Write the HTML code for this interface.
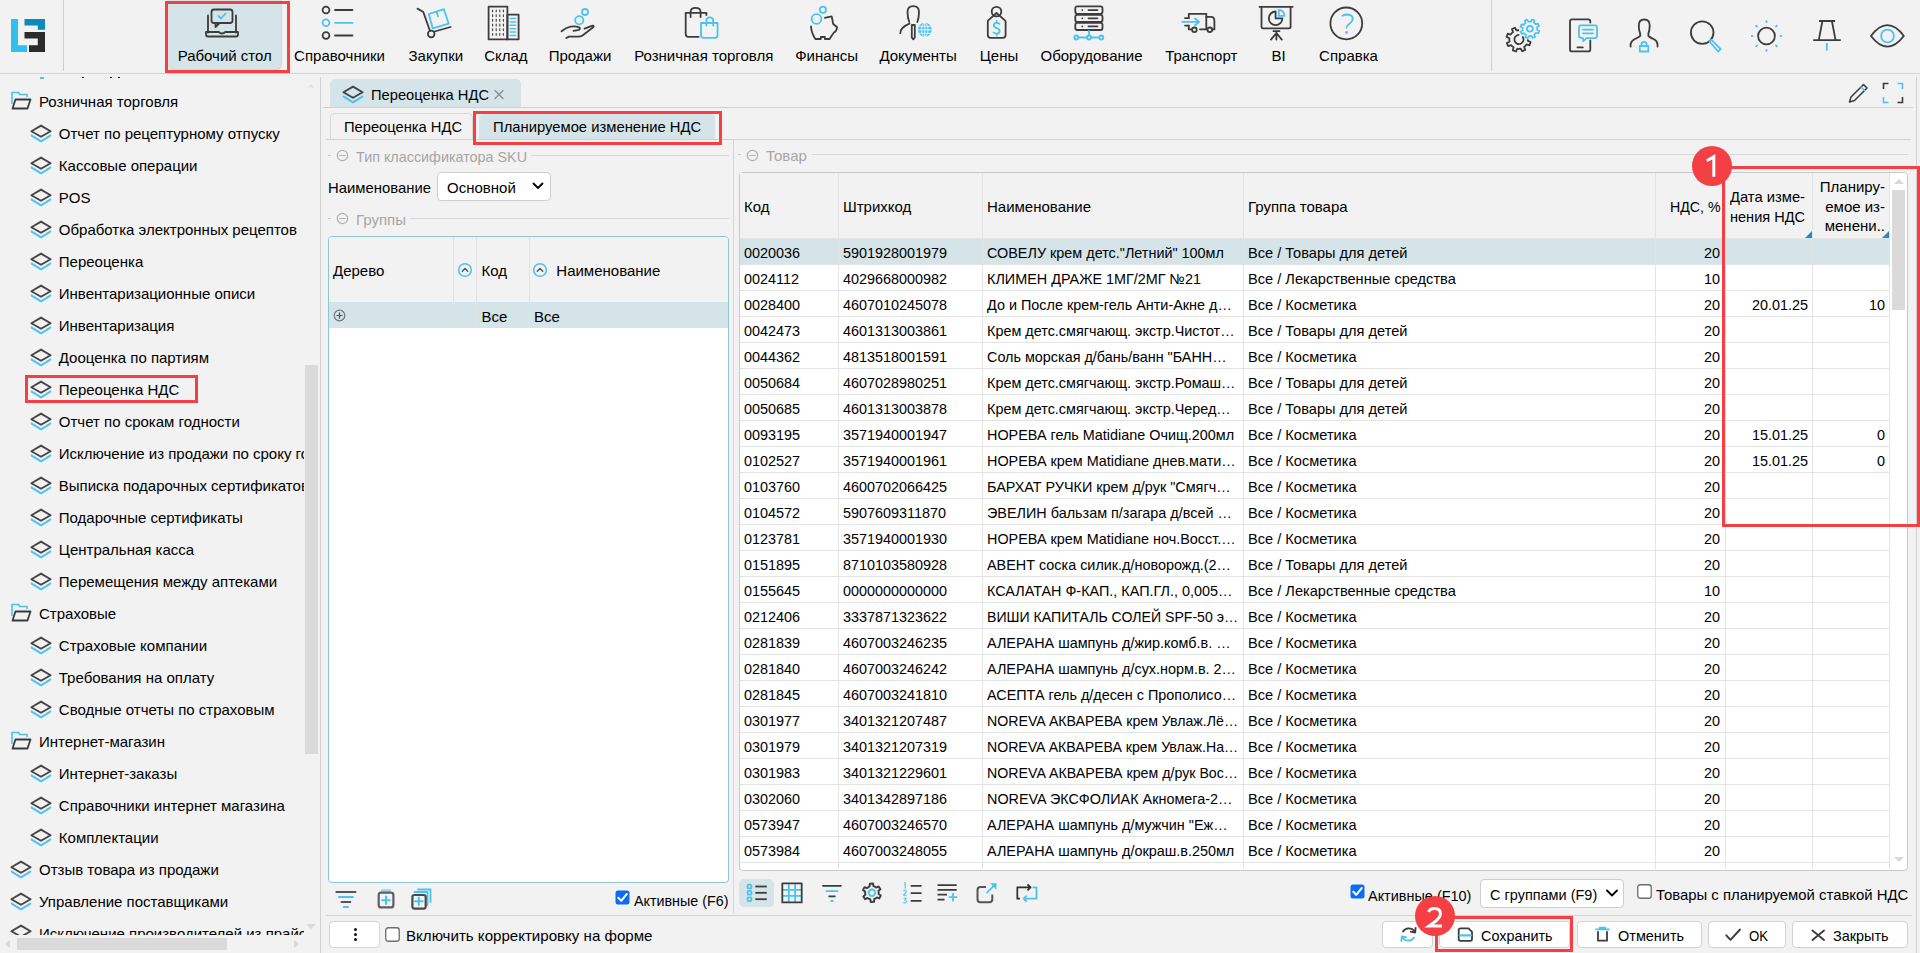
<!DOCTYPE html><html><head><meta charset="utf-8"><style>
html,body{margin:0;padding:0;}
body{width:1920px;height:953px;overflow:hidden;background:#f2f2f2;position:relative;font-family:"Liberation Sans",sans-serif;color:#000;}
.t{position:absolute;white-space:nowrap;}
.b{position:absolute;box-sizing:border-box;}
.clip{position:absolute;overflow:hidden;}
</style></head><body>

<div class="b" style="left:0px;top:73px;width:1920px;height:1px;background:#d3d3d3"></div>
<div class="b" style="left:63px;top:0px;width:1px;height:71px;background:#cfcfcf"></div>
<div class="b" style="left:1491px;top:0px;width:1px;height:71px;background:#cfcfcf"></div>
<svg class="b" style="left:0px;top:0px" width="64" height="72" viewBox="0 0 64 72" fill="none" stroke-linecap="round" stroke-linejoin="round"><path d="M11 19h7v26.3h9V52H11z" fill="#30c0f0"/><path d="M24.5 19H45v10.8h-7.2v-4.3H24.5z" fill="#0a89bc"/><path d="M24.5 32H45v20H29v-6.7h8.8v-6.8H24.5z" fill="#2b2b2b"/></svg>
<div class="b" style="left:168px;top:0px;width:114px;height:70px;background:#d4e4e9;border-radius:0 0 6px 6px;border-right:1px solid #c9d6da;border-bottom:1px solid #c9d6da"></div>
<div class="b" style="left:165px;top:1px;width:125px;height:72px;border:3px solid #f43f45"></div>
<div class="t" style="left:124.75px;width:200px;text-align:center;top:48.30px;font-size:15px;line-height:15px;">Рабочий стол</div>
<div class="t" style="left:239.55px;width:200px;text-align:center;top:48.30px;font-size:15px;line-height:15px;">Справочники</div>
<div class="t" style="left:335.85px;width:200px;text-align:center;top:48.30px;font-size:15px;line-height:15px;">Закупки</div>
<div class="t" style="left:405.9px;width:200px;text-align:center;top:48.30px;font-size:15px;line-height:15px;">Склад</div>
<div class="t" style="left:480.0px;width:200px;text-align:center;top:48.30px;font-size:15px;line-height:15px;">Продажи</div>
<div class="t" style="left:603.75px;width:200px;text-align:center;top:48.30px;font-size:15px;line-height:15px;">Розничная торговля</div>
<div class="t" style="left:726.625px;width:200px;text-align:center;top:48.30px;font-size:15px;line-height:15px;">Финансы</div>
<div class="t" style="left:818.125px;width:200px;text-align:center;top:48.30px;font-size:15px;line-height:15px;">Документы</div>
<div class="t" style="left:899.0px;width:200px;text-align:center;top:48.30px;font-size:15px;line-height:15px;">Цены</div>
<div class="t" style="left:991.5px;width:200px;text-align:center;top:48.30px;font-size:15px;line-height:15px;">Оборудование</div>
<div class="t" style="left:1101.25px;width:200px;text-align:center;top:48.30px;font-size:15px;line-height:15px;">Транспорт</div>
<div class="t" style="left:1178.5px;width:200px;text-align:center;top:48.30px;font-size:15px;line-height:15px;">BI</div>
<div class="t" style="left:1248.5px;width:200px;text-align:center;top:48.30px;font-size:15px;line-height:15px;">Справка</div>
<svg class="b" style="left:0;top:0" width="1920" height="72" viewBox="0 0 1920 72" stroke-linecap="round" stroke-linejoin="round"><rect x="211.5" y="9.5" width="21" height="13.5" rx="2.5" stroke="#3c3c3c" stroke-width="1.8" fill="none"/><path d="M215.5 23 L215.5 27 L219.5 23" stroke="#3c3c3c" stroke-width="1.8" fill="none"/><path d="M218.5 16 L221 18.5 L225.5 13.5" stroke="#4cc3ef" stroke-width="1.8" fill="none"/><path d="M208 15.5 V32.5 M236 15.5 V32.5" stroke="#3c3c3c" stroke-width="1.8" fill="none"/><path d="M206 32 H219 Q220 33.5 222 33.5 Q224 33.5 225 32 H238 V34.5 Q238 36.5 236 36.5 H208 Q206 36.5 206 34.5 Z" stroke="#3c3c3c" stroke-width="1.8" fill="none"/><circle cx="326" cy="10" r="3.4" stroke="#3c3c3c" stroke-width="1.8" fill="none"/><path d="M335 10 H352.5" stroke="#3c3c3c" stroke-width="1.8" fill="none"/><circle cx="326" cy="22.8" r="3.4" stroke="#4cc3ef" stroke-width="1.8" fill="none"/><path d="M335 22.8 H352.5" stroke="#4cc3ef" stroke-width="1.8" fill="none"/><circle cx="326" cy="35.5" r="3.4" stroke="#3c3c3c" stroke-width="1.8" fill="none"/><path d="M335 35.5 H352.5" stroke="#3c3c3c" stroke-width="1.8" fill="none"/><path d="M417.5 8.6 L423.3 12 L430 31" stroke="#3c3c3c" stroke-width="1.8" fill="none"/><circle cx="431.2" cy="34" r="3.3" stroke="#3c3c3c" stroke-width="1.8" fill="none"/><path d="M434.5 31.5 L450.6 27" stroke="#3c3c3c" stroke-width="1.8" fill="none"/><path d="M428.8 14 L443.9 9.2 L448.7 23.7 L432.7 28.3 Z" stroke="#4cc3ef" stroke-width="1.8" fill="none"/><path d="M436.8 11.8 L437.9 16.3" stroke="#4cc3ef" stroke-width="1.8" fill="none"/><rect x="488.6" y="6.6" width="18.8" height="32.8" stroke="#3c3c3c" stroke-width="1.8" fill="none" stroke-width="1.9"/><rect x="507.4" y="14.6" width="11.2" height="24.8" stroke="#3c3c3c" stroke-width="1.8" fill="none" stroke-width="1.9"/><path d="M492.6 10.0 V11.8" stroke="#3c3c3c" stroke-width="1.1"/><path d="M492.6 14.7 V16.5" stroke="#3c3c3c" stroke-width="1.1"/><path d="M492.6 19.400000000000002 V21.2" stroke="#3c3c3c" stroke-width="1.1"/><path d="M492.6 24.1 V25.9" stroke="#3c3c3c" stroke-width="1.1"/><path d="M492.6 28.8 V30.599999999999998" stroke="#3c3c3c" stroke-width="1.1"/><path d="M492.6 33.5 V35.3" stroke="#3c3c3c" stroke-width="1.1"/><path d="M496.2 10.0 V11.8" stroke="#3c3c3c" stroke-width="1.1"/><path d="M496.2 14.7 V16.5" stroke="#3c3c3c" stroke-width="1.1"/><path d="M496.2 19.400000000000002 V21.2" stroke="#3c3c3c" stroke-width="1.1"/><path d="M496.2 24.1 V25.9" stroke="#3c3c3c" stroke-width="1.1"/><path d="M496.2 28.8 V30.599999999999998" stroke="#3c3c3c" stroke-width="1.1"/><path d="M496.2 33.5 V35.3" stroke="#3c3c3c" stroke-width="1.1"/><path d="M499.8 10.0 V11.8" stroke="#3c3c3c" stroke-width="1.1"/><path d="M499.8 14.7 V16.5" stroke="#3c3c3c" stroke-width="1.1"/><path d="M499.8 19.400000000000002 V21.2" stroke="#3c3c3c" stroke-width="1.1"/><path d="M499.8 24.1 V25.9" stroke="#3c3c3c" stroke-width="1.1"/><path d="M499.8 28.8 V30.599999999999998" stroke="#3c3c3c" stroke-width="1.1"/><path d="M499.8 33.5 V35.3" stroke="#3c3c3c" stroke-width="1.1"/><path d="M503.4 10.0 V11.8" stroke="#3c3c3c" stroke-width="1.1"/><path d="M503.4 14.7 V16.5" stroke="#3c3c3c" stroke-width="1.1"/><path d="M503.4 19.400000000000002 V21.2" stroke="#3c3c3c" stroke-width="1.1"/><path d="M503.4 24.1 V25.9" stroke="#3c3c3c" stroke-width="1.1"/><path d="M503.4 28.8 V30.599999999999998" stroke="#3c3c3c" stroke-width="1.1"/><path d="M503.4 33.5 V35.3" stroke="#3c3c3c" stroke-width="1.1"/><path d="M510.2 18.5 H515.6" stroke="#4cc3ef" stroke-width="1.5"/><path d="M510.2 21.9 H515.6" stroke="#4cc3ef" stroke-width="1.5"/><path d="M510.2 25.3 H515.6" stroke="#4cc3ef" stroke-width="1.5"/><path d="M510.2 28.7 H515.6" stroke="#4cc3ef" stroke-width="1.5"/><path d="M510.2 32.1 H515.6" stroke="#4cc3ef" stroke-width="1.5"/><path d="M510.2 35.5 H515.6" stroke="#4cc3ef" stroke-width="1.5"/><circle cx="579.3" cy="20.3" r="4.1" stroke="#4cc3ef" stroke-width="1.8" fill="none"/><circle cx="585" cy="12" r="3" stroke="#4cc3ef" stroke-width="1.8" fill="none"/><path d="M561.5 31.2 Q566 27.5 570.5 26.6 Q576 26 579 27.3 Q581 28.6 579 29.8 L573.5 30.8" stroke="#3c3c3c" stroke-width="1.8" fill="none"/><path d="M584.5 28.6 L592.5 25.6 Q594.5 25.6 593.2 27.3 L582.5 35.5 Q581 36.6 578 36.6 L569 36.6 L566.3 38" stroke="#3c3c3c" stroke-width="1.8" fill="none"/><path d="M698.7 36.8 H688.5 Q685.7 36.8 685.7 34 V12.9 H706.4 V15" stroke="#3c3c3c" stroke-width="1.8" fill="none"/><path d="M690.6 17 V12 Q690.6 7.9 695.6 7.9 Q700.6 7.9 700.6 12 V17" stroke="#3c3c3c" stroke-width="1.8" fill="none"/><path d="M701 23 H717.6 V35.3 Q717.6 37.9 715 37.9 H703.6 Q701 37.9 701 35.3 Z" stroke="#4cc3ef" stroke-width="1.8" fill="none"/><path d="M706.4 25.5 V21 Q706.4 17.3 709.8 17.3 Q713.2 17.3 713.2 21 V25.5" stroke="#4cc3ef" stroke-width="1.8" fill="none"/><circle cx="816.5" cy="19" r="4.9" stroke="#4cc3ef" stroke-width="1.8" fill="none"/><circle cx="822.9" cy="9.8" r="3.1" stroke="#4cc3ef" stroke-width="1.8" fill="none"/><path d="M811 26.4 Q811.5 33.5 815.4 39 H820.8 V37 H824.9 V39 H829.6 Q832 35 834 32.5 Q837 31 837 27 Q834.5 25 833 23.7 Q832.5 19.5 831.6 16.3 Q828 17 824.9 17.8" stroke="#3c3c3c" stroke-width="1.8" fill="none"/><path d="M909.3 22 Q907.5 18 907.5 12 Q907.5 6.1 913.2 6.1 Q919 6.1 919 12 Q919 18 917.3 22" stroke="#3c3c3c" stroke-width="1.8" fill="none"/><path d="M909.5 23.7 Q905 25.5 902.5 28 Q900.4 30 900.4 33.2" stroke="#3c3c3c" stroke-width="1.8" fill="none"/><path d="M911.8 25 H914.8 L914.8 37.5 L913.3 39.3 L911.8 37.5 Z" stroke="#3c3c3c" stroke-width="1.8" fill="none" stroke-width="1.5"/><circle cx="924.8" cy="29.8" r="7" fill="#4cc3ef"/><path d="M917.8 29.8 H931.8 M924.8 22.8 V36.8 M918.8 26.3 H930.8 M918.8 33.3 H930.8" stroke="#fff" stroke-width="0.8"/><ellipse cx="924.8" cy="29.8" rx="3.2" ry="7" stroke="#fff" stroke-width="0.8" fill="none"/><circle cx="996.5" cy="11.6" r="4.8" stroke="#3c3c3c" stroke-width="1.8" fill="none"/><path d="M996.5 13 L988 20.6 Q987.8 21 987.8 22 V35 Q987.8 37.8 990.6 37.8 H1002.8 Q1005.6 37.8 1005.6 35 V22 Q1005.6 21 1005.2 20.6 Z" stroke="#3c3c3c" stroke-width="1.8" fill="none" fill="#f2f2f2"/><path d="M999.5 23.8 Q998.5 22.8 996.7 22.8 Q993.8 22.8 993.8 25.3 Q993.8 27.4 996.7 28.1 Q999.6 28.8 999.6 31.2 Q999.6 33.6 996.7 33.6 Q994.5 33.6 993.6 32.5 M996.7 20.8 V22.8 M996.7 33.6 V35.4" stroke="#4cc3ef" stroke-width="1.8" fill="none" stroke-width="1.7"/><rect x="1075.3" y="6.3" width="27.2" height="7.500000000000001" rx="2" stroke="#3c3c3c" stroke-width="1.8" fill="none"/><circle cx="1082.3" cy="10.05" r="0.9" fill="#3c3c3c"/><path d="M1088.5 10.05 H1097.5" stroke="#3c3c3c" stroke-width="1.8" fill="none"/><rect x="1075.3" y="14.8" width="27.2" height="7.099999999999998" rx="2" stroke="#3c3c3c" stroke-width="1.8" fill="none"/><circle cx="1082.3" cy="18.35" r="0.9" fill="#3c3c3c"/><path d="M1088.5 18.35 H1097.5" stroke="#3c3c3c" stroke-width="1.8" fill="none"/><rect x="1075.3" y="22.8" width="27.2" height="7.199999999999999" rx="2" stroke="#3c3c3c" stroke-width="1.8" fill="none"/><circle cx="1082.3" cy="26.4" r="0.9" fill="#3c3c3c"/><path d="M1088.5 26.4 H1097.5" stroke="#3c3c3c" stroke-width="1.8" fill="none"/><path d="M1078.3 37.5 H1087 M1091 37.5 H1099.2 M1089 31 V35.5" stroke="#4cc3ef" stroke-width="1.8" fill="none" stroke-width="1.6"/><circle cx="1076.3" cy="37.5" r="2" stroke="#4cc3ef" stroke-width="1.8" fill="none" stroke-width="1.5"/><circle cx="1089" cy="37.5" r="2" stroke="#4cc3ef" stroke-width="1.8" fill="none" stroke-width="1.5"/><circle cx="1101.3" cy="37.5" r="2" stroke="#4cc3ef" stroke-width="1.8" fill="none" stroke-width="1.5"/><path d="M1188.8 18.1 V13.8 H1206.3 V29.4 H1200" stroke="#3c3c3c" stroke-width="1.8" fill="none"/><path d="M1206.3 16.9 H1211 Q1214.4 16.9 1214.4 21 V29.4 H1212" stroke="#3c3c3c" stroke-width="1.8" fill="none"/><path d="M1188.8 25.6 V29.4 H1192" stroke="#3c3c3c" stroke-width="1.8" fill="none"/><path d="M1185 18.1 H1188.8 M1185 25.6 H1188.8" stroke="#3c3c3c" stroke-width="1.8" fill="none"/><circle cx="1194.4" cy="29.8" r="2.3" stroke="#3c3c3c" stroke-width="1.8" fill="none"/><circle cx="1209.8" cy="29.8" r="2.3" stroke="#3c3c3c" stroke-width="1.8" fill="none"/><path d="M1182.3 21.9 H1198.5 M1195 18.5 L1199.2 21.9 L1195 25.3" stroke="#4cc3ef" stroke-width="1.8" fill="none"/><path d="M1259.5 6.8 H1292.7" stroke="#3c3c3c" stroke-width="1.8" fill="none"/><path d="M1261.5 6.8 V26.8 Q1261.5 28.4 1263 28.4 H1289 Q1290.6 28.4 1290.6 26.8 V6.8" stroke="#3c3c3c" stroke-width="1.8" fill="none"/><path d="M1275.6 11.5 A6.8 6.8 0 1 0 1282.4 18.3 H1275.6 Z" stroke="#3c3c3c" stroke-width="1.8" fill="none"/><path d="M1278.8 9.8 V15.9 H1284.6 A5.9 6 0 0 0 1278.8 9.8 Z" stroke="#4cc3ef" stroke-width="1.8" fill="none" stroke-width="1.6"/><path d="M1273.4 31.1 H1279.5 M1276.4 31.1 V39.6 M1276.4 33 L1271 39.6 M1276.4 33 L1281.8 39.6" stroke="#3c3c3c" stroke-width="1.8" fill="none"/><circle cx="1346.3" cy="23.4" r="15.9" stroke="#3c3c3c" stroke-width="1.8" fill="none" stroke-width="1.9"/><path d="M1342.5 15.8 Q1344.5 14.5 1347.3 14.5 Q1352.8 14.8 1352.8 18.6 Q1352.8 21.4 1349.5 23.8 Q1346.5 26 1346.5 27.5" stroke="#4cc3ef" stroke-width="1.8" fill="none"/><circle cx="1346.5" cy="32.4" r="1.4" fill="#4cc3ef"/><defs><clipPath id="gclip"><path d="M1500 10 H1560 V60 H1500Z M1530 28.8 m-11 0 a11 11 0 1 0 22 0 a11 11 0 1 0 -22 0Z" clip-rule="evenodd"/></clipPath></defs><g clip-path="url(#gclip)"><path d="M1527.90 39.50 L1527.81 40.81 L1530.60 42.18 L1529.47 45.26 L1526.45 44.48 L1525.18 46.08 L1525.18 46.08 L1524.18 46.94 L1525.19 49.89 L1522.22 51.26 L1520.63 48.58 L1518.60 48.80 L1518.60 48.80 L1517.29 48.71 L1515.92 51.50 L1512.84 50.37 L1513.62 47.35 L1512.02 46.08 L1512.02 46.08 L1511.16 45.08 L1508.21 46.09 L1506.84 43.12 L1509.52 41.53 L1509.30 39.50 L1509.30 39.50 L1509.39 38.19 L1506.60 36.82 L1507.73 33.74 L1510.75 34.52 L1512.02 32.92 L1512.02 32.92 L1513.02 32.06 L1512.01 29.11 L1514.98 27.74 L1516.57 30.42 L1518.60 30.20 L1518.60 30.20 L1519.91 30.29 L1521.28 27.50 L1524.36 28.63 L1523.58 31.65 L1525.18 32.92 L1525.18 32.92 L1526.04 33.92 L1528.99 32.91 L1530.36 35.88 L1527.68 37.47 L1527.90 39.50Z" stroke="#3c3c3c" stroke-width="1.8" fill="none" stroke-linejoin="round"/></g><path d="M1522.8 37 A4.6 4.6 0 1 1 1518.6 34.9" stroke="#3c3c3c" stroke-width="1.8" fill="none"/><path d="M1537.20 28.80 L1537.13 29.83 L1539.27 30.89 L1538.38 33.29 L1536.06 32.71 L1535.06 33.96 L1535.06 33.96 L1534.28 34.64 L1535.04 36.91 L1532.72 37.98 L1531.49 35.92 L1529.90 36.10 L1529.90 36.10 L1528.87 36.03 L1527.81 38.17 L1525.41 37.28 L1525.99 34.96 L1524.74 33.96 L1524.74 33.96 L1524.06 33.18 L1521.79 33.94 L1520.72 31.62 L1522.78 30.39 L1522.60 28.80 L1522.60 28.80 L1522.67 27.77 L1520.53 26.71 L1521.42 24.31 L1523.74 24.89 L1524.74 23.64 L1524.74 23.64 L1525.52 22.96 L1524.76 20.69 L1527.08 19.62 L1528.31 21.68 L1529.90 21.50 L1529.90 21.50 L1530.93 21.57 L1531.99 19.43 L1534.39 20.32 L1533.81 22.64 L1535.06 23.64 L1535.06 23.64 L1535.74 24.42 L1538.01 23.66 L1539.08 25.98 L1537.02 27.21 L1537.20 28.80Z" stroke="#4cc3ef" stroke-width="1.7" fill="none" stroke-linejoin="round"/><circle cx="1529.9" cy="28.8" r="2.9" stroke="#4cc3ef" stroke-width="1.8" fill="none" stroke-width="1.6"/><path d="M1590.3 22.5 V21.3 Q1590.3 19.3 1588.3 19.3 H1572 Q1570 19.3 1570 21.3 V49.4 Q1570 51.4 1572 51.4 H1588.3 Q1590.3 51.4 1590.3 49.4 V40.5" stroke="#3c3c3c" stroke-width="1.8" fill="none"/><path d="M1577.5 47.4 H1582.8" stroke="#3c3c3c" stroke-width="1.8" fill="none"/><path d="M1581 25.3 H1595 Q1597 25.3 1597 27.3 V36.1 Q1597 38.1 1595 38.1 H1586.5 L1583.3 41.2 L1583 38.1 Q1579 38.1 1579 36.1 V27.3 Q1579 25.3 1581 25.3 Z" stroke="#4cc3ef" stroke-width="1.8" fill="none"/><path d="M1583 29.7 H1593 M1583 33.3 H1593" stroke="#4cc3ef" stroke-width="1.8" fill="none"/><path d="M1630.6 46.5 V44 Q1631.5 40.5 1635 39 Q1639.5 37 1640.3 35.5 Q1640.3 33.5 1639.3 30.6 Q1638.8 28 1638.8 25.5 Q1638.8 19.5 1644.3 19.5 Q1649.7 19.5 1649.7 25.5 Q1649.7 28 1649.2 30.6 Q1648.2 33.5 1648.3 35.5 Q1649 37 1653.5 39 Q1657 40.5 1657.5 44 V46.5" stroke="#3c3c3c" stroke-width="1.8" fill="none"/><rect x="1639.8" y="46" width="8.5" height="5.5" stroke="#4cc3ef" stroke-width="1.8" fill="none" stroke-width="1.6"/><path d="M1641.5 46 V44.3 Q1641.5 41.8 1644 41.8 Q1646.6 41.8 1646.6 44.3 V46" stroke="#4cc3ef" stroke-width="1.8" fill="none" stroke-width="1.6"/><circle cx="1702.2" cy="32.6" r="11.3" stroke="#3c3c3c" stroke-width="1.8" fill="none" stroke-width="1.9"/><path d="M1709.5 41.5 L1711.3 39.7 L1720.7 49.1 L1718.1 51.5 Z" stroke="#4cc3ef" stroke-width="1.8" fill="none" stroke-width="1.6"/><circle cx="1766.5" cy="36" r="8.4" stroke="#3c3c3c" stroke-width="1.8" fill="none"/><path d="M1779.70 36.00 L1782.10 36.00" stroke="#4cc3ef" stroke-width="1.8" fill="none" stroke-width="1.7" stroke-linecap="butt"/><path d="M1775.41 44.91 L1777.25 46.75" stroke="#4cc3ef" stroke-width="1.8" fill="none" stroke-width="1.7" stroke-linecap="butt"/><path d="M1766.50 49.20 L1766.50 51.60" stroke="#4cc3ef" stroke-width="1.8" fill="none" stroke-width="1.7" stroke-linecap="butt"/><path d="M1757.59 44.91 L1755.75 46.75" stroke="#4cc3ef" stroke-width="1.8" fill="none" stroke-width="1.7" stroke-linecap="butt"/><path d="M1753.30 36.00 L1750.90 36.00" stroke="#4cc3ef" stroke-width="1.8" fill="none" stroke-width="1.7" stroke-linecap="butt"/><path d="M1757.59 27.09 L1755.75 25.25" stroke="#4cc3ef" stroke-width="1.8" fill="none" stroke-width="1.7" stroke-linecap="butt"/><path d="M1766.50 22.80 L1766.50 20.40" stroke="#4cc3ef" stroke-width="1.8" fill="none" stroke-width="1.7" stroke-linecap="butt"/><path d="M1775.41 27.09 L1777.25 25.25" stroke="#4cc3ef" stroke-width="1.8" fill="none" stroke-width="1.7" stroke-linecap="butt"/><path d="M1819 21 H1835.1 M1822.4 21 L1818.8 39.8 M1831.9 21 L1835.5 39.8 M1813.2 40.2 H1840.8" stroke="#3c3c3c" stroke-width="1.8" fill="none" stroke-linecap="butt"/><path d="M1826.8 43 V50.6" stroke="#4cc3ef" stroke-width="1.8" fill="none" stroke-linecap="butt"/><path d="M1871 36 Q1879 25.2 1887.4 25.2 Q1895.8 25.2 1903.8 36 Q1895.8 46.6 1887.4 46.6 Q1879 46.6 1871 36 Z" stroke="#3c3c3c" stroke-width="1.8" fill="none"/><circle cx="1887.5" cy="36" r="6.4" stroke="#4cc3ef" stroke-width="1.8" fill="none"/></svg>
<div class="b" style="left:320px;top:77px;width:1px;height:876px;background:#d0d0d0"></div>
<div class="clip" style="left:0;top:74px;width:304px;height:861px;">

<svg class="b" style="left:11px;top:17.0px" width="21" height="20" viewBox="0 0 21 20" fill="none"><path d="M1 13 V1.5 H7.5 L8.8 3.5 H16 V6" stroke="#4cc3ef" stroke-width="1.6"/><path d="M4.5 8.5 H19.5 L16.5 17.5 H1.5 Z" stroke="#3a3a3a" stroke-width="1.8" stroke-linejoin="round"/></svg>
<div class="t" style="left:39px;top:19.80px;font-size:15px;line-height:15px;">Розничная торговля</div>
<svg class="b" style="left:30px;top:49.5px" width="23" height="20" viewBox="0 0 23 20" fill="none"><path d="M11 1.6 L20.6 7.2 L11 12.8 L1.4 7.2 Z" stroke="#444" stroke-width="1.9" stroke-linejoin="round"/><path d="M1.7 11.6 L11 17.3 L20.3 11.6" stroke="#4cc3ef" stroke-width="2" stroke-linejoin="round" stroke-linecap="round"/></svg>
<div class="t" style="left:58.8px;top:51.80px;font-size:15px;line-height:15px;">Отчет по рецептурному отпуску</div>
<svg class="b" style="left:30px;top:81.5px" width="23" height="20" viewBox="0 0 23 20" fill="none"><path d="M11 1.6 L20.6 7.2 L11 12.8 L1.4 7.2 Z" stroke="#444" stroke-width="1.9" stroke-linejoin="round"/><path d="M1.7 11.6 L11 17.3 L20.3 11.6" stroke="#4cc3ef" stroke-width="2" stroke-linejoin="round" stroke-linecap="round"/></svg>
<div class="t" style="left:58.8px;top:83.80px;font-size:15px;line-height:15px;">Кассовые операции</div>
<svg class="b" style="left:30px;top:113.5px" width="23" height="20" viewBox="0 0 23 20" fill="none"><path d="M11 1.6 L20.6 7.2 L11 12.8 L1.4 7.2 Z" stroke="#444" stroke-width="1.9" stroke-linejoin="round"/><path d="M1.7 11.6 L11 17.3 L20.3 11.6" stroke="#4cc3ef" stroke-width="2" stroke-linejoin="round" stroke-linecap="round"/></svg>
<div class="t" style="left:58.8px;top:115.80px;font-size:15px;line-height:15px;">POS</div>
<svg class="b" style="left:30px;top:145.5px" width="23" height="20" viewBox="0 0 23 20" fill="none"><path d="M11 1.6 L20.6 7.2 L11 12.8 L1.4 7.2 Z" stroke="#444" stroke-width="1.9" stroke-linejoin="round"/><path d="M1.7 11.6 L11 17.3 L20.3 11.6" stroke="#4cc3ef" stroke-width="2" stroke-linejoin="round" stroke-linecap="round"/></svg>
<div class="t" style="left:58.8px;top:147.80px;font-size:15px;line-height:15px;">Обработка электронных рецептов</div>
<svg class="b" style="left:30px;top:177.5px" width="23" height="20" viewBox="0 0 23 20" fill="none"><path d="M11 1.6 L20.6 7.2 L11 12.8 L1.4 7.2 Z" stroke="#444" stroke-width="1.9" stroke-linejoin="round"/><path d="M1.7 11.6 L11 17.3 L20.3 11.6" stroke="#4cc3ef" stroke-width="2" stroke-linejoin="round" stroke-linecap="round"/></svg>
<div class="t" style="left:58.8px;top:179.80px;font-size:15px;line-height:15px;">Переоценка</div>
<svg class="b" style="left:30px;top:209.5px" width="23" height="20" viewBox="0 0 23 20" fill="none"><path d="M11 1.6 L20.6 7.2 L11 12.8 L1.4 7.2 Z" stroke="#444" stroke-width="1.9" stroke-linejoin="round"/><path d="M1.7 11.6 L11 17.3 L20.3 11.6" stroke="#4cc3ef" stroke-width="2" stroke-linejoin="round" stroke-linecap="round"/></svg>
<div class="t" style="left:58.8px;top:211.80px;font-size:15px;line-height:15px;">Инвентаризационные описи</div>
<svg class="b" style="left:30px;top:241.5px" width="23" height="20" viewBox="0 0 23 20" fill="none"><path d="M11 1.6 L20.6 7.2 L11 12.8 L1.4 7.2 Z" stroke="#444" stroke-width="1.9" stroke-linejoin="round"/><path d="M1.7 11.6 L11 17.3 L20.3 11.6" stroke="#4cc3ef" stroke-width="2" stroke-linejoin="round" stroke-linecap="round"/></svg>
<div class="t" style="left:58.8px;top:243.80px;font-size:15px;line-height:15px;">Инвентаризация</div>
<svg class="b" style="left:30px;top:273.5px" width="23" height="20" viewBox="0 0 23 20" fill="none"><path d="M11 1.6 L20.6 7.2 L11 12.8 L1.4 7.2 Z" stroke="#444" stroke-width="1.9" stroke-linejoin="round"/><path d="M1.7 11.6 L11 17.3 L20.3 11.6" stroke="#4cc3ef" stroke-width="2" stroke-linejoin="round" stroke-linecap="round"/></svg>
<div class="t" style="left:58.8px;top:275.80px;font-size:15px;line-height:15px;">Дооценка по партиям</div>
<svg class="b" style="left:30px;top:305.5px" width="23" height="20" viewBox="0 0 23 20" fill="none"><path d="M11 1.6 L20.6 7.2 L11 12.8 L1.4 7.2 Z" stroke="#444" stroke-width="1.9" stroke-linejoin="round"/><path d="M1.7 11.6 L11 17.3 L20.3 11.6" stroke="#4cc3ef" stroke-width="2" stroke-linejoin="round" stroke-linecap="round"/></svg>
<div class="t" style="left:58.8px;top:307.80px;font-size:15px;line-height:15px;">Переоценка НДС</div>
<svg class="b" style="left:30px;top:337.5px" width="23" height="20" viewBox="0 0 23 20" fill="none"><path d="M11 1.6 L20.6 7.2 L11 12.8 L1.4 7.2 Z" stroke="#444" stroke-width="1.9" stroke-linejoin="round"/><path d="M1.7 11.6 L11 17.3 L20.3 11.6" stroke="#4cc3ef" stroke-width="2" stroke-linejoin="round" stroke-linecap="round"/></svg>
<div class="t" style="left:58.8px;top:339.80px;font-size:15px;line-height:15px;">Отчет по срокам годности</div>
<svg class="b" style="left:30px;top:369.5px" width="23" height="20" viewBox="0 0 23 20" fill="none"><path d="M11 1.6 L20.6 7.2 L11 12.8 L1.4 7.2 Z" stroke="#444" stroke-width="1.9" stroke-linejoin="round"/><path d="M1.7 11.6 L11 17.3 L20.3 11.6" stroke="#4cc3ef" stroke-width="2" stroke-linejoin="round" stroke-linecap="round"/></svg>
<div class="t" style="left:58.8px;top:371.80px;font-size:15px;line-height:15px;">Исключение из продажи по сроку годности</div>
<svg class="b" style="left:30px;top:401.5px" width="23" height="20" viewBox="0 0 23 20" fill="none"><path d="M11 1.6 L20.6 7.2 L11 12.8 L1.4 7.2 Z" stroke="#444" stroke-width="1.9" stroke-linejoin="round"/><path d="M1.7 11.6 L11 17.3 L20.3 11.6" stroke="#4cc3ef" stroke-width="2" stroke-linejoin="round" stroke-linecap="round"/></svg>
<div class="t" style="left:58.8px;top:403.80px;font-size:15px;line-height:15px;">Выписка подарочных сертификатов</div>
<svg class="b" style="left:30px;top:433.5px" width="23" height="20" viewBox="0 0 23 20" fill="none"><path d="M11 1.6 L20.6 7.2 L11 12.8 L1.4 7.2 Z" stroke="#444" stroke-width="1.9" stroke-linejoin="round"/><path d="M1.7 11.6 L11 17.3 L20.3 11.6" stroke="#4cc3ef" stroke-width="2" stroke-linejoin="round" stroke-linecap="round"/></svg>
<div class="t" style="left:58.8px;top:435.80px;font-size:15px;line-height:15px;">Подарочные сертификаты</div>
<svg class="b" style="left:30px;top:465.5px" width="23" height="20" viewBox="0 0 23 20" fill="none"><path d="M11 1.6 L20.6 7.2 L11 12.8 L1.4 7.2 Z" stroke="#444" stroke-width="1.9" stroke-linejoin="round"/><path d="M1.7 11.6 L11 17.3 L20.3 11.6" stroke="#4cc3ef" stroke-width="2" stroke-linejoin="round" stroke-linecap="round"/></svg>
<div class="t" style="left:58.8px;top:467.80px;font-size:15px;line-height:15px;">Центральная касса</div>
<svg class="b" style="left:30px;top:497.5px" width="23" height="20" viewBox="0 0 23 20" fill="none"><path d="M11 1.6 L20.6 7.2 L11 12.8 L1.4 7.2 Z" stroke="#444" stroke-width="1.9" stroke-linejoin="round"/><path d="M1.7 11.6 L11 17.3 L20.3 11.6" stroke="#4cc3ef" stroke-width="2" stroke-linejoin="round" stroke-linecap="round"/></svg>
<div class="t" style="left:58.8px;top:499.80px;font-size:15px;line-height:15px;">Перемещения между аптеками</div>
<svg class="b" style="left:11px;top:529.0px" width="21" height="20" viewBox="0 0 21 20" fill="none"><path d="M1 13 V1.5 H7.5 L8.8 3.5 H16 V6" stroke="#4cc3ef" stroke-width="1.6"/><path d="M4.5 8.5 H19.5 L16.5 17.5 H1.5 Z" stroke="#3a3a3a" stroke-width="1.8" stroke-linejoin="round"/></svg>
<div class="t" style="left:39px;top:531.80px;font-size:15px;line-height:15px;">Страховые</div>
<svg class="b" style="left:30px;top:561.5px" width="23" height="20" viewBox="0 0 23 20" fill="none"><path d="M11 1.6 L20.6 7.2 L11 12.8 L1.4 7.2 Z" stroke="#444" stroke-width="1.9" stroke-linejoin="round"/><path d="M1.7 11.6 L11 17.3 L20.3 11.6" stroke="#4cc3ef" stroke-width="2" stroke-linejoin="round" stroke-linecap="round"/></svg>
<div class="t" style="left:58.8px;top:563.80px;font-size:15px;line-height:15px;">Страховые компании</div>
<svg class="b" style="left:30px;top:593.5px" width="23" height="20" viewBox="0 0 23 20" fill="none"><path d="M11 1.6 L20.6 7.2 L11 12.8 L1.4 7.2 Z" stroke="#444" stroke-width="1.9" stroke-linejoin="round"/><path d="M1.7 11.6 L11 17.3 L20.3 11.6" stroke="#4cc3ef" stroke-width="2" stroke-linejoin="round" stroke-linecap="round"/></svg>
<div class="t" style="left:58.8px;top:595.80px;font-size:15px;line-height:15px;">Требования на оплату</div>
<svg class="b" style="left:30px;top:625.5px" width="23" height="20" viewBox="0 0 23 20" fill="none"><path d="M11 1.6 L20.6 7.2 L11 12.8 L1.4 7.2 Z" stroke="#444" stroke-width="1.9" stroke-linejoin="round"/><path d="M1.7 11.6 L11 17.3 L20.3 11.6" stroke="#4cc3ef" stroke-width="2" stroke-linejoin="round" stroke-linecap="round"/></svg>
<div class="t" style="left:58.8px;top:627.80px;font-size:15px;line-height:15px;">Сводные отчеты по страховым</div>
<svg class="b" style="left:11px;top:657.0px" width="21" height="20" viewBox="0 0 21 20" fill="none"><path d="M1 13 V1.5 H7.5 L8.8 3.5 H16 V6" stroke="#4cc3ef" stroke-width="1.6"/><path d="M4.5 8.5 H19.5 L16.5 17.5 H1.5 Z" stroke="#3a3a3a" stroke-width="1.8" stroke-linejoin="round"/></svg>
<div class="t" style="left:39px;top:659.80px;font-size:15px;line-height:15px;">Интернет-магазин</div>
<svg class="b" style="left:30px;top:689.5px" width="23" height="20" viewBox="0 0 23 20" fill="none"><path d="M11 1.6 L20.6 7.2 L11 12.8 L1.4 7.2 Z" stroke="#444" stroke-width="1.9" stroke-linejoin="round"/><path d="M1.7 11.6 L11 17.3 L20.3 11.6" stroke="#4cc3ef" stroke-width="2" stroke-linejoin="round" stroke-linecap="round"/></svg>
<div class="t" style="left:58.8px;top:691.80px;font-size:15px;line-height:15px;">Интернет-заказы</div>
<svg class="b" style="left:30px;top:721.5px" width="23" height="20" viewBox="0 0 23 20" fill="none"><path d="M11 1.6 L20.6 7.2 L11 12.8 L1.4 7.2 Z" stroke="#444" stroke-width="1.9" stroke-linejoin="round"/><path d="M1.7 11.6 L11 17.3 L20.3 11.6" stroke="#4cc3ef" stroke-width="2" stroke-linejoin="round" stroke-linecap="round"/></svg>
<div class="t" style="left:58.8px;top:723.80px;font-size:15px;line-height:15px;">Справочники интернет магазина</div>
<svg class="b" style="left:30px;top:753.5px" width="23" height="20" viewBox="0 0 23 20" fill="none"><path d="M11 1.6 L20.6 7.2 L11 12.8 L1.4 7.2 Z" stroke="#444" stroke-width="1.9" stroke-linejoin="round"/><path d="M1.7 11.6 L11 17.3 L20.3 11.6" stroke="#4cc3ef" stroke-width="2" stroke-linejoin="round" stroke-linecap="round"/></svg>
<div class="t" style="left:58.8px;top:755.80px;font-size:15px;line-height:15px;">Комплектации</div>
<svg class="b" style="left:10px;top:785.5px" width="23" height="20" viewBox="0 0 23 20" fill="none"><path d="M11 1.6 L20.6 7.2 L11 12.8 L1.4 7.2 Z" stroke="#444" stroke-width="1.9" stroke-linejoin="round"/><path d="M1.7 11.6 L11 17.3 L20.3 11.6" stroke="#4cc3ef" stroke-width="2" stroke-linejoin="round" stroke-linecap="round"/></svg>
<div class="t" style="left:39px;top:787.80px;font-size:15px;line-height:15px;">Отзыв товара из продажи</div>
<svg class="b" style="left:10px;top:817.5px" width="23" height="20" viewBox="0 0 23 20" fill="none"><path d="M11 1.6 L20.6 7.2 L11 12.8 L1.4 7.2 Z" stroke="#444" stroke-width="1.9" stroke-linejoin="round"/><path d="M1.7 11.6 L11 17.3 L20.3 11.6" stroke="#4cc3ef" stroke-width="2" stroke-linejoin="round" stroke-linecap="round"/></svg>
<div class="t" style="left:39px;top:819.80px;font-size:15px;line-height:15px;">Управление поставщиками</div>
<svg class="b" style="left:10px;top:849.5px" width="23" height="20" viewBox="0 0 23 20" fill="none"><path d="M11 1.6 L20.6 7.2 L11 12.8 L1.4 7.2 Z" stroke="#444" stroke-width="1.9" stroke-linejoin="round"/><path d="M1.7 11.6 L11 17.3 L20.3 11.6" stroke="#4cc3ef" stroke-width="2" stroke-linejoin="round" stroke-linecap="round"/></svg>
<div class="t" style="left:39px;top:851.80px;font-size:15px;line-height:15px;">Исключение производителей из прайса</div>
<div class="b" style="left:40px;top:3px;width:4px;height:1.5px;background:#4cc3ef"></div>
<div class="b" style="left:82px;top:3px;width:2px;height:1px;background:#222"></div>
<div class="b" style="left:110px;top:3px;width:2px;height:1px;background:#222"></div>
<div class="b" style="left:118px;top:3px;width:2px;height:1px;background:#222"></div>
</div>
<div class="b" style="left:25px;top:375px;width:173px;height:28px;border:3px solid #f43f45"></div>
<div class="b" style="left:305px;top:365px;width:13px;height:389px;background:#dadada"></div>
<svg class="b" style="left:303px;top:80px" width="16" height="10" viewBox="0 0 16 10" fill="none" stroke-linecap="round" stroke-linejoin="round"><path d="M4.5 7.5 L8 4 L11.5 7.5 Z" fill="#e0e0e0"/></svg>
<svg class="b" style="left:303px;top:922px" width="16" height="10" viewBox="0 0 16 10" fill="none" stroke-linecap="round" stroke-linejoin="round"><path d="M3 2 L8 7 L13 2 Z" fill="#d8d8d8"/></svg>
<div class="b" style="left:17px;top:938px;width:210px;height:12px;background:#dadada"></div>
<svg class="b" style="left:2px;top:938px" width="12" height="12" viewBox="0 0 12 12" fill="none" stroke-linecap="round" stroke-linejoin="round"><path d="M8 2 L3 6 L8 10 Z" fill="#d8d8d8"/></svg>
<svg class="b" style="left:290px;top:938px" width="12" height="12" viewBox="0 0 12 12" fill="none" stroke-linecap="round" stroke-linejoin="round"><path d="M4 2 L9 6 L4 10 Z" fill="#d8d8d8"/></svg>
<div class="b" style="left:323px;top:107px;width:1590px;height:1px;background:#d0d0d0"></div>
<div class="b" style="left:1916px;top:77px;width:1px;height:876px;background:#d0d0d0"></div>
<div class="b" style="left:330px;top:79px;width:191px;height:28px;background:#d4e4e9;border-radius:5px 5px 0 0;border:1px solid #d9e3e6;border-bottom:none"></div>
<svg class="b" style="left:342px;top:84.5px" width="23" height="20" viewBox="0 0 23 20" fill="none"><path d="M11 1.6 L20.6 7.2 L11 12.8 L1.4 7.2 Z" stroke="#444" stroke-width="1.9" stroke-linejoin="round"/><path d="M1.7 11.6 L11 17.3 L20.3 11.6" stroke="#4cc3ef" stroke-width="2" stroke-linejoin="round" stroke-linecap="round"/></svg>
<div class="t" style="left:371px;top:87.30px;font-size:15px;line-height:15px;color:#000;transform:scaleX(0.9799);transform-origin:0 0;">Переоценка НДС</div>
<svg class="b" style="left:493px;top:89px" width="12" height="11" viewBox="0 0 12 11" fill="none" stroke-linecap="round" stroke-linejoin="round"><path d="M2 1.5 L10 9.5 M10 1.5 L2 9.5" stroke="#8a8a8a" stroke-width="1.2"/></svg>
<svg class="b" style="left:1846px;top:81px" width="24" height="24" viewBox="0 0 24 24" fill="none" stroke-linecap="round" stroke-linejoin="round"><path d="M3.5 21 L5 16 L17.5 3.5 L21 7 L8.5 19.5 Z" stroke="#3a3a3a" stroke-width="1.5"/><path d="M15 6 L18.5 9.5" stroke="#4cc3ef" stroke-width="1.5"/></svg>
<svg class="b" style="left:1881px;top:81px" width="24" height="24" viewBox="0 0 24 24" fill="none" stroke-linecap="round" stroke-linejoin="round"><path d="M2.5 8 V2.5 H7.5" stroke="#3a3a3a" stroke-width="1.6" stroke-linecap="butt" stroke-linejoin="miter"/><path d="M16.5 2.5 H21.5 V8" stroke="#4cc3ef" stroke-width="1.6" stroke-linecap="butt" stroke-linejoin="miter"/><path d="M2.5 16 V21.5 H7.5" stroke="#4cc3ef" stroke-width="1.6" stroke-linecap="butt" stroke-linejoin="miter"/><path d="M16.5 21.5 H21.5 V16" stroke="#3a3a3a" stroke-width="1.6" stroke-linecap="butt" stroke-linejoin="miter"/></svg>
<div class="b" style="left:326px;top:139px;width:1585px;height:1px;background:#d0d0d0"></div>
<div class="b" style="left:330px;top:113px;width:143px;height:26px;background:#f2f2f2;border:1px solid #d8d8d8;border-bottom:none;border-radius:5px 5px 0 0"></div>
<div class="t" style="left:343.5px;top:119.30px;font-size:15px;line-height:15px;color:#000;transform:scaleX(0.9799);transform-origin:0 0;">Переоценка НДС</div>
<div class="b" style="left:479px;top:114px;width:236px;height:25px;background:#d4e4e9;border-radius:4px 4px 0 0"></div>
<div class="t" style="left:492.8px;top:119.30px;font-size:15px;line-height:15px;color:#000;transform:scaleX(0.9864);transform-origin:0 0;">Планируемое изменение НДС</div>
<div class="b" style="left:473px;top:111px;width:249px;height:34px;border:3px solid #f43f45"></div>
<div class="b" style="left:733px;top:140px;width:1px;height:773px;background:#d6d6d6"></div>
<div class="b" style="left:328px;top:155px;width:3px;height:1px;background:#c8c8c8"></div>
<svg class="b" style="left:336px;top:149px" width="13" height="13" viewBox="0 0 13 13" fill="none" stroke-linecap="round" stroke-linejoin="round"><circle cx="6.5" cy="6.5" r="5.2" stroke="#b0b0b0" stroke-width="1.2"/><path d="M3.8 6.5 H9.2" stroke="#b0b0b0" stroke-width="1.2"/></svg>
<div class="t" style="left:356px;top:148.80px;font-size:15px;line-height:15px;color:#a6a6a6;transform:scaleX(0.9567);transform-origin:0 0;">Тип классификатора SKU</div>
<div class="b" style="left:531px;top:155px;width:198px;height:1px;background:#d8d8d8"></div>
<div class="t" style="left:328px;top:180.30px;font-size:15px;line-height:15px;color:#000;transform:scaleX(0.9907);transform-origin:0 0;">Наименование</div>
<div class="b" style="left:437px;top:172px;width:114px;height:29px;background:#fff;border:1px solid #cfcfcf;border-radius:4px"></div>
<div class="t" style="left:447px;top:180.30px;font-size:15px;line-height:15px;color:#000;">Основной</div>
<svg class="b" style="left:531px;top:180px" width="14" height="12" viewBox="0 0 14 12" fill="none" stroke-linecap="round" stroke-linejoin="round"><path d="M2.5 3.5 L7 8 L11.5 3.5" stroke="#000" stroke-width="1.8"/></svg>
<div class="b" style="left:328px;top:218px;width:3px;height:1px;background:#c8c8c8"></div>
<svg class="b" style="left:336px;top:212px" width="13" height="13" viewBox="0 0 13 13" fill="none" stroke-linecap="round" stroke-linejoin="round"><circle cx="6.5" cy="6.5" r="5.2" stroke="#b0b0b0" stroke-width="1.2"/><path d="M3.8 6.5 H9.2" stroke="#b0b0b0" stroke-width="1.2"/></svg>
<div class="t" style="left:356px;top:211.80px;font-size:15px;line-height:15px;color:#a6a6a6;transform:scaleX(1.0003);transform-origin:0 0;">Группы</div>
<div class="b" style="left:410px;top:218px;width:319px;height:1px;background:#d8d8d8"></div>
<div class="b" style="left:328px;top:236px;width:401px;height:647px;background:#fff;border:1px solid #8fc4dd;border-radius:4px"></div>
<div class="b" style="left:329px;top:237px;width:399px;height:65px;background:#f2f2f2;border-radius:3px 3px 0 0"></div>
<div class="b" style="left:329px;top:302px;width:399px;height:26px;background:#d4e4e9"></div>
<div class="b" style="left:453px;top:237px;width:1px;height:91px;background:#e2e2e2"></div>
<div class="b" style="left:476px;top:237px;width:1px;height:91px;background:#e2e2e2"></div>
<div class="b" style="left:529px;top:237px;width:1px;height:91px;background:#e2e2e2"></div>
<div class="t" style="left:333px;top:263.30px;font-size:15px;line-height:15px;color:#000;">Дерево</div>
<svg class="b" style="left:457px;top:261.5px" width="16" height="16" viewBox="0 0 16 16" fill="none" stroke-linecap="round" stroke-linejoin="round"><circle cx="8" cy="8" r="6.3" stroke="#4cc3ef" stroke-width="1.6"/><path d="M5.3 9.2 L8 6.5 L10.7 9.2" stroke="#555" stroke-width="1.5"/></svg>
<div class="t" style="left:481.5px;top:263.30px;font-size:15px;line-height:15px;color:#000;">Код</div>
<svg class="b" style="left:532.3px;top:261.5px" width="16" height="16" viewBox="0 0 16 16" fill="none" stroke-linecap="round" stroke-linejoin="round"><circle cx="8" cy="8" r="6.3" stroke="#4cc3ef" stroke-width="1.6"/><path d="M5.3 9.2 L8 6.5 L10.7 9.2" stroke="#555" stroke-width="1.5"/></svg>
<div class="t" style="left:556.3px;top:263.30px;font-size:15px;line-height:15px;color:#000;">Наименование</div>
<svg class="b" style="left:333px;top:309px" width="13" height="13" viewBox="0 0 13 13" fill="none" stroke-linecap="round" stroke-linejoin="round"><circle cx="6.5" cy="6.5" r="5.3" stroke="#777" stroke-width="1.2"/><path d="M3.8 6.5 H9.2 M6.5 3.8 V9.2" stroke="#555" stroke-width="1.2"/></svg>
<div class="t" style="left:481.5px;top:309.30px;font-size:15px;line-height:15px;color:#000;">Все</div>
<div class="t" style="left:534px;top:309.30px;font-size:15px;line-height:15px;color:#000;">Все</div>
<svg class="b" style="left:330px;top:880px" width="110" height="35" viewBox="0 0 110 35" fill="none" stroke-linecap="round" stroke-linejoin="round"><path d="M6.3 12 H25.5" stroke="#555" stroke-width="2" stroke-linecap="round"/><path d="M8.9 17 H22.9" stroke="#4cc3ef" stroke-width="2" stroke-linecap="round"/><path d="M11.5 22 H20.3" stroke="#555" stroke-width="2" stroke-linecap="round"/><path d="M13.8 27 H18" stroke="#4cc3ef" stroke-width="2" stroke-linecap="round"/><rect x="51" y="9.2" width="10" height="2.4" fill="#8fd6f3"/><rect x="48.7" y="12.6" width="14.7" height="14.8" rx="2.5" stroke="#5f5f5f" stroke-width="2.2" fill="none"/><path d="M56 16.5 V24 M52.2 20.3 H59.8" stroke="#4cc3ef" stroke-width="2" fill="none"/><path d="M84.5 12 H97.5 V25" stroke="#4cc3ef" stroke-width="1.8" fill="none"/><path d="M88 9.5 H100.5 V22" stroke="#4cc3ef" stroke-width="1.8" fill="none"/><rect x="82.4" y="15" width="13.3" height="13.6" rx="2" stroke="#4a4a4a" stroke-width="2.2" fill="none"/><path d="M88.8 17.5 V25 M85 21.2 H92.6" stroke="#4cc3ef" stroke-width="2" fill="none"/></svg>
<svg class="b" style="left:615px;top:890px" width="15" height="15" viewBox="0 0 15 15" fill="none" stroke-linecap="round" stroke-linejoin="round"><rect x="0.5" y="0.5" width="14" height="14" rx="2.5" fill="#0b6cf2"/><path d="M3.3 7.8 L6.2 10.8 L11.8 4" stroke="#fff" stroke-width="2"/></svg>
<div class="t" style="left:634.2px;top:893.30px;font-size:15px;line-height:15px;color:#000;transform:scaleX(0.9542);transform-origin:0 0;">Активные (F6)</div>
<div class="b" style="left:326px;top:915px;width:1586px;height:1px;background:#d0d0d0"></div>
<div class="b" style="left:329px;top:921px;width:51px;height:27px;background:#fff;border:1px solid #d4d4d4;border-radius:4px"></div>
<div class="b" style="left:353.5px;top:928px;width:3px;height:3px;background:#111;border-radius:50%"></div>
<div class="b" style="left:353.5px;top:933px;width:3px;height:3px;background:#111;border-radius:50%"></div>
<div class="b" style="left:353.5px;top:938px;width:3px;height:3px;background:#111;border-radius:50%"></div>
<svg class="b" style="left:385px;top:927px" width="15" height="15" viewBox="0 0 15 15" fill="none" stroke-linecap="round" stroke-linejoin="round"><rect x="0.75" y="0.75" width="13.5" height="13.5" rx="2.5" stroke="#6d6d6d" stroke-width="1.3" fill="#fff"/></svg>
<div class="t" style="left:406px;top:928.30px;font-size:15px;line-height:15px;color:#000;transform:scaleX(1.0057);transform-origin:0 0;">Включить корректировку на форме</div>
<div class="b" style="left:738px;top:154px;width:3px;height:1px;background:#c8c8c8"></div>
<svg class="b" style="left:746px;top:149px" width="13" height="13" viewBox="0 0 13 13" fill="none" stroke-linecap="round" stroke-linejoin="round"><circle cx="6.5" cy="6.5" r="5.2" stroke="#b0b0b0" stroke-width="1.2"/><path d="M3.8 6.5 H9.2" stroke="#b0b0b0" stroke-width="1.2"/></svg>
<div class="t" style="left:766px;top:148.30px;font-size:15px;line-height:15px;color:#a6a6a6;">Товар</div>
<div class="b" style="left:812px;top:154px;width:1096px;height:1px;background:#d8d8d8"></div>
<div class="b" style="left:739px;top:172px;width:1169px;height:699px;background:#fff;border:1px solid #c9c9c9;border-radius:4px"></div>
<div class="b" style="left:740px;top:173px;width:1149px;height:65px;background:#f2f2f2"></div>
<div class="b" style="left:1889px;top:173px;width:18px;height:696px;background:#fff;border-radius:0 3px 3px 0"></div>
<div class="b" style="left:740px;top:239px;width:1149px;height:25px;background:#d4e4e9"></div>
<div class="b" style="left:838px;top:173px;width:1px;height:696px;background:#e4e4e4"></div>
<div class="b" style="left:982px;top:173px;width:1px;height:696px;background:#e4e4e4"></div>
<div class="b" style="left:1243px;top:173px;width:1px;height:696px;background:#e4e4e4"></div>
<div class="b" style="left:1655px;top:173px;width:1px;height:696px;background:#e4e4e4"></div>
<div class="b" style="left:1725px;top:173px;width:1px;height:696px;background:#e4e4e4"></div>
<div class="b" style="left:1812px;top:173px;width:1px;height:696px;background:#e4e4e4"></div>
<div class="b" style="left:1889px;top:173px;width:1px;height:696px;background:#e4e4e4"></div>
<div class="b" style="left:740px;top:238px;width:1149px;height:1px;background:#e4e4e4"></div>
<div class="b" style="left:740px;top:264px;width:1149px;height:1px;background:#e4e4e4"></div>
<div class="b" style="left:740px;top:290px;width:1149px;height:1px;background:#e4e4e4"></div>
<div class="b" style="left:740px;top:316px;width:1149px;height:1px;background:#e4e4e4"></div>
<div class="b" style="left:740px;top:342px;width:1149px;height:1px;background:#e4e4e4"></div>
<div class="b" style="left:740px;top:368px;width:1149px;height:1px;background:#e4e4e4"></div>
<div class="b" style="left:740px;top:394px;width:1149px;height:1px;background:#e4e4e4"></div>
<div class="b" style="left:740px;top:420px;width:1149px;height:1px;background:#e4e4e4"></div>
<div class="b" style="left:740px;top:446px;width:1149px;height:1px;background:#e4e4e4"></div>
<div class="b" style="left:740px;top:472px;width:1149px;height:1px;background:#e4e4e4"></div>
<div class="b" style="left:740px;top:498px;width:1149px;height:1px;background:#e4e4e4"></div>
<div class="b" style="left:740px;top:524px;width:1149px;height:1px;background:#e4e4e4"></div>
<div class="b" style="left:740px;top:550px;width:1149px;height:1px;background:#e4e4e4"></div>
<div class="b" style="left:740px;top:576px;width:1149px;height:1px;background:#e4e4e4"></div>
<div class="b" style="left:740px;top:602px;width:1149px;height:1px;background:#e4e4e4"></div>
<div class="b" style="left:740px;top:628px;width:1149px;height:1px;background:#e4e4e4"></div>
<div class="b" style="left:740px;top:654px;width:1149px;height:1px;background:#e4e4e4"></div>
<div class="b" style="left:740px;top:680px;width:1149px;height:1px;background:#e4e4e4"></div>
<div class="b" style="left:740px;top:706px;width:1149px;height:1px;background:#e4e4e4"></div>
<div class="b" style="left:740px;top:732px;width:1149px;height:1px;background:#e4e4e4"></div>
<div class="b" style="left:740px;top:758px;width:1149px;height:1px;background:#e4e4e4"></div>
<div class="b" style="left:740px;top:784px;width:1149px;height:1px;background:#e4e4e4"></div>
<div class="b" style="left:740px;top:810px;width:1149px;height:1px;background:#e4e4e4"></div>
<div class="b" style="left:740px;top:836px;width:1149px;height:1px;background:#e4e4e4"></div>
<div class="b" style="left:740px;top:862px;width:1149px;height:1px;background:#e4e4e4"></div>
<div class="t" style="left:744px;top:199.30px;font-size:15px;line-height:15px;color:#000;">Код</div>
<div class="t" style="left:843px;top:199.30px;font-size:15px;line-height:15px;color:#000;">Штрихкод</div>
<div class="t" style="left:987px;top:199.30px;font-size:15px;line-height:15px;color:#000;">Наименование</div>
<div class="t" style="left:1248px;top:199.30px;font-size:15px;line-height:15px;color:#000;">Группа товара</div>
<div class="t" style="right:200px;top:199.30px;font-size:15px;line-height:15px;color:#000;transform:scaleX(0.9439);transform-origin:100% 0;">НДС, %</div>
<div class="t" style="left:1730px;top:189.30px;font-size:15px;line-height:15px;color:#000;transform:scaleX(0.9830);transform-origin:0 0;">Дата изме-</div>
<div class="t" style="left:1730px;top:209.30px;font-size:15px;line-height:15px;color:#000;transform:scaleX(0.9691);transform-origin:0 0;">нения НДС</div>
<div class="t" style="right:35px;top:179.30px;font-size:15px;line-height:15px;color:#000;">Планиру-</div>
<div class="t" style="right:35px;top:198.90px;font-size:15px;line-height:15px;color:#000;">емое из-</div>
<div class="t" style="right:35px;top:218.30px;font-size:15px;line-height:15px;color:#000;">менени..</div>
<svg class="b" style="left:1805px;top:231px" width="7" height="7" viewBox="0 0 7 7" fill="none" stroke-linecap="round" stroke-linejoin="round"><path d="M7 0 V7 H0 Z" fill="#1a8fd0"/></svg>
<svg class="b" style="left:1882px;top:231px" width="7" height="7" viewBox="0 0 7 7" fill="none" stroke-linecap="round" stroke-linejoin="round"><path d="M7 0 V7 H0 Z" fill="#1a8fd0"/></svg>
<div class="t" style="left:744px;top:245.51px;font-size:14.4px;line-height:14.4px;color:#000;">0020036</div>
<div class="t" style="left:843px;top:245.51px;font-size:14.4px;line-height:14.4px;color:#000;">5901928001979</div>
<div class="t" style="left:987px;top:245.51px;font-size:14.4px;line-height:14.4px;color:#000;">СОВЕЛУ крем детс.&quot;Летний&quot; 100мл</div>
<div class="t" style="left:1248px;top:245.51px;font-size:14.4px;line-height:14.4px;color:#000;transform:scaleX(1.0140);transform-origin:0 0;">Все / Товары для детей</div>
<div class="t" style="right:200px;top:245.51px;font-size:14.4px;line-height:14.4px;color:#000;">20</div>
<div class="t" style="left:744px;top:271.51px;font-size:14.4px;line-height:14.4px;color:#000;">0024112</div>
<div class="t" style="left:843px;top:271.51px;font-size:14.4px;line-height:14.4px;color:#000;">4029668000982</div>
<div class="t" style="left:987px;top:271.51px;font-size:14.4px;line-height:14.4px;color:#000;">КЛИМЕН ДРАЖЕ 1МГ/2МГ №21</div>
<div class="t" style="left:1248px;top:271.51px;font-size:14.4px;line-height:14.4px;color:#000;transform:scaleX(1.0140);transform-origin:0 0;">Все / Лекарственные средства</div>
<div class="t" style="right:200px;top:271.51px;font-size:14.4px;line-height:14.4px;color:#000;">10</div>
<div class="t" style="left:744px;top:297.51px;font-size:14.4px;line-height:14.4px;color:#000;">0028400</div>
<div class="t" style="left:843px;top:297.51px;font-size:14.4px;line-height:14.4px;color:#000;">4607010245078</div>
<div class="t" style="left:987px;top:297.51px;font-size:14.4px;line-height:14.4px;color:#000;">До и После крем-гель Анти-Акне д…</div>
<div class="t" style="left:1248px;top:297.51px;font-size:14.4px;line-height:14.4px;color:#000;transform:scaleX(1.0140);transform-origin:0 0;">Все / Косметика</div>
<div class="t" style="right:200px;top:297.51px;font-size:14.4px;line-height:14.4px;color:#000;">20</div>
<div class="t" style="right:112px;top:297.51px;font-size:14.4px;line-height:14.4px;color:#000;">20.01.25</div>
<div class="t" style="right:35px;top:297.51px;font-size:14.4px;line-height:14.4px;color:#000;">10</div>
<div class="t" style="left:744px;top:323.51px;font-size:14.4px;line-height:14.4px;color:#000;">0042473</div>
<div class="t" style="left:843px;top:323.51px;font-size:14.4px;line-height:14.4px;color:#000;">4601313003861</div>
<div class="t" style="left:987px;top:323.51px;font-size:14.4px;line-height:14.4px;color:#000;">Крем детс.смягчающ. экстр.Чистот…</div>
<div class="t" style="left:1248px;top:323.51px;font-size:14.4px;line-height:14.4px;color:#000;transform:scaleX(1.0140);transform-origin:0 0;">Все / Товары для детей</div>
<div class="t" style="right:200px;top:323.51px;font-size:14.4px;line-height:14.4px;color:#000;">20</div>
<div class="t" style="left:744px;top:349.51px;font-size:14.4px;line-height:14.4px;color:#000;">0044362</div>
<div class="t" style="left:843px;top:349.51px;font-size:14.4px;line-height:14.4px;color:#000;">4813518001591</div>
<div class="t" style="left:987px;top:349.51px;font-size:14.4px;line-height:14.4px;color:#000;">Соль морская д/бань/ванн &quot;БАНН…</div>
<div class="t" style="left:1248px;top:349.51px;font-size:14.4px;line-height:14.4px;color:#000;transform:scaleX(1.0140);transform-origin:0 0;">Все / Косметика</div>
<div class="t" style="right:200px;top:349.51px;font-size:14.4px;line-height:14.4px;color:#000;">20</div>
<div class="t" style="left:744px;top:375.51px;font-size:14.4px;line-height:14.4px;color:#000;">0050684</div>
<div class="t" style="left:843px;top:375.51px;font-size:14.4px;line-height:14.4px;color:#000;">4607028980251</div>
<div class="t" style="left:987px;top:375.51px;font-size:14.4px;line-height:14.4px;color:#000;">Крем детс.смягчающ. экстр.Ромаш…</div>
<div class="t" style="left:1248px;top:375.51px;font-size:14.4px;line-height:14.4px;color:#000;transform:scaleX(1.0140);transform-origin:0 0;">Все / Товары для детей</div>
<div class="t" style="right:200px;top:375.51px;font-size:14.4px;line-height:14.4px;color:#000;">20</div>
<div class="t" style="left:744px;top:401.51px;font-size:14.4px;line-height:14.4px;color:#000;">0050685</div>
<div class="t" style="left:843px;top:401.51px;font-size:14.4px;line-height:14.4px;color:#000;">4601313003878</div>
<div class="t" style="left:987px;top:401.51px;font-size:14.4px;line-height:14.4px;color:#000;">Крем детс.смягчающ. экстр.Черед…</div>
<div class="t" style="left:1248px;top:401.51px;font-size:14.4px;line-height:14.4px;color:#000;transform:scaleX(1.0140);transform-origin:0 0;">Все / Товары для детей</div>
<div class="t" style="right:200px;top:401.51px;font-size:14.4px;line-height:14.4px;color:#000;">20</div>
<div class="t" style="left:744px;top:427.51px;font-size:14.4px;line-height:14.4px;color:#000;">0093195</div>
<div class="t" style="left:843px;top:427.51px;font-size:14.4px;line-height:14.4px;color:#000;">3571940001947</div>
<div class="t" style="left:987px;top:427.51px;font-size:14.4px;line-height:14.4px;color:#000;">НОРЕВА гель Matidiane Очищ.200мл</div>
<div class="t" style="left:1248px;top:427.51px;font-size:14.4px;line-height:14.4px;color:#000;transform:scaleX(1.0140);transform-origin:0 0;">Все / Косметика</div>
<div class="t" style="right:200px;top:427.51px;font-size:14.4px;line-height:14.4px;color:#000;">20</div>
<div class="t" style="right:112px;top:427.51px;font-size:14.4px;line-height:14.4px;color:#000;">15.01.25</div>
<div class="t" style="right:35px;top:427.51px;font-size:14.4px;line-height:14.4px;color:#000;">0</div>
<div class="t" style="left:744px;top:453.51px;font-size:14.4px;line-height:14.4px;color:#000;">0102527</div>
<div class="t" style="left:843px;top:453.51px;font-size:14.4px;line-height:14.4px;color:#000;">3571940001961</div>
<div class="t" style="left:987px;top:453.51px;font-size:14.4px;line-height:14.4px;color:#000;">НОРЕВА крем Matidiane днев.мати…</div>
<div class="t" style="left:1248px;top:453.51px;font-size:14.4px;line-height:14.4px;color:#000;transform:scaleX(1.0140);transform-origin:0 0;">Все / Косметика</div>
<div class="t" style="right:200px;top:453.51px;font-size:14.4px;line-height:14.4px;color:#000;">20</div>
<div class="t" style="right:112px;top:453.51px;font-size:14.4px;line-height:14.4px;color:#000;">15.01.25</div>
<div class="t" style="right:35px;top:453.51px;font-size:14.4px;line-height:14.4px;color:#000;">0</div>
<div class="t" style="left:744px;top:479.51px;font-size:14.4px;line-height:14.4px;color:#000;">0103760</div>
<div class="t" style="left:843px;top:479.51px;font-size:14.4px;line-height:14.4px;color:#000;">4600702066425</div>
<div class="t" style="left:987px;top:479.51px;font-size:14.4px;line-height:14.4px;color:#000;">БАРХАТ РУЧКИ крем д/рук &quot;Смягч…</div>
<div class="t" style="left:1248px;top:479.51px;font-size:14.4px;line-height:14.4px;color:#000;transform:scaleX(1.0140);transform-origin:0 0;">Все / Косметика</div>
<div class="t" style="right:200px;top:479.51px;font-size:14.4px;line-height:14.4px;color:#000;">20</div>
<div class="t" style="left:744px;top:505.51px;font-size:14.4px;line-height:14.4px;color:#000;">0104572</div>
<div class="t" style="left:843px;top:505.51px;font-size:14.4px;line-height:14.4px;color:#000;">5907609311870</div>
<div class="t" style="left:987px;top:505.51px;font-size:14.4px;line-height:14.4px;color:#000;">ЭВЕЛИН бальзам п/загара д/всей …</div>
<div class="t" style="left:1248px;top:505.51px;font-size:14.4px;line-height:14.4px;color:#000;transform:scaleX(1.0140);transform-origin:0 0;">Все / Косметика</div>
<div class="t" style="right:200px;top:505.51px;font-size:14.4px;line-height:14.4px;color:#000;">20</div>
<div class="t" style="left:744px;top:531.51px;font-size:14.4px;line-height:14.4px;color:#000;">0123781</div>
<div class="t" style="left:843px;top:531.51px;font-size:14.4px;line-height:14.4px;color:#000;">3571940001930</div>
<div class="t" style="left:987px;top:531.51px;font-size:14.4px;line-height:14.4px;color:#000;">НОРЕВА крем Matidiane ноч.Восст.…</div>
<div class="t" style="left:1248px;top:531.51px;font-size:14.4px;line-height:14.4px;color:#000;transform:scaleX(1.0140);transform-origin:0 0;">Все / Косметика</div>
<div class="t" style="right:200px;top:531.51px;font-size:14.4px;line-height:14.4px;color:#000;">20</div>
<div class="t" style="left:744px;top:557.51px;font-size:14.4px;line-height:14.4px;color:#000;">0151895</div>
<div class="t" style="left:843px;top:557.51px;font-size:14.4px;line-height:14.4px;color:#000;">8710103580928</div>
<div class="t" style="left:987px;top:557.51px;font-size:14.4px;line-height:14.4px;color:#000;">АВЕНТ соска силик.д/новорожд.(2…</div>
<div class="t" style="left:1248px;top:557.51px;font-size:14.4px;line-height:14.4px;color:#000;transform:scaleX(1.0140);transform-origin:0 0;">Все / Товары для детей</div>
<div class="t" style="right:200px;top:557.51px;font-size:14.4px;line-height:14.4px;color:#000;">20</div>
<div class="t" style="left:744px;top:583.51px;font-size:14.4px;line-height:14.4px;color:#000;">0155645</div>
<div class="t" style="left:843px;top:583.51px;font-size:14.4px;line-height:14.4px;color:#000;">0000000000000</div>
<div class="t" style="left:987px;top:583.51px;font-size:14.4px;line-height:14.4px;color:#000;">КСАЛАТАН Ф-КАП., КАП.ГЛ., 0,005…</div>
<div class="t" style="left:1248px;top:583.51px;font-size:14.4px;line-height:14.4px;color:#000;transform:scaleX(1.0140);transform-origin:0 0;">Все / Лекарственные средства</div>
<div class="t" style="right:200px;top:583.51px;font-size:14.4px;line-height:14.4px;color:#000;">10</div>
<div class="t" style="left:744px;top:609.51px;font-size:14.4px;line-height:14.4px;color:#000;">0212406</div>
<div class="t" style="left:843px;top:609.51px;font-size:14.4px;line-height:14.4px;color:#000;">3337871323622</div>
<div class="t" style="left:987px;top:609.51px;font-size:14.4px;line-height:14.4px;color:#000;transform:scaleX(0.9802);transform-origin:0 0;">ВИШИ КАПИТАЛЬ СОЛЕЙ SPF-50 э…</div>
<div class="t" style="left:1248px;top:609.51px;font-size:14.4px;line-height:14.4px;color:#000;transform:scaleX(1.0140);transform-origin:0 0;">Все / Косметика</div>
<div class="t" style="right:200px;top:609.51px;font-size:14.4px;line-height:14.4px;color:#000;">20</div>
<div class="t" style="left:744px;top:635.51px;font-size:14.4px;line-height:14.4px;color:#000;">0281839</div>
<div class="t" style="left:843px;top:635.51px;font-size:14.4px;line-height:14.4px;color:#000;">4607003246235</div>
<div class="t" style="left:987px;top:635.51px;font-size:14.4px;line-height:14.4px;color:#000;">АЛЕРАНА шампунь д/жир.комб.в. …</div>
<div class="t" style="left:1248px;top:635.51px;font-size:14.4px;line-height:14.4px;color:#000;transform:scaleX(1.0140);transform-origin:0 0;">Все / Косметика</div>
<div class="t" style="right:200px;top:635.51px;font-size:14.4px;line-height:14.4px;color:#000;">20</div>
<div class="t" style="left:744px;top:661.51px;font-size:14.4px;line-height:14.4px;color:#000;">0281840</div>
<div class="t" style="left:843px;top:661.51px;font-size:14.4px;line-height:14.4px;color:#000;">4607003246242</div>
<div class="t" style="left:987px;top:661.51px;font-size:14.4px;line-height:14.4px;color:#000;">АЛЕРАНА шампунь д/сух.норм.в. 2…</div>
<div class="t" style="left:1248px;top:661.51px;font-size:14.4px;line-height:14.4px;color:#000;transform:scaleX(1.0140);transform-origin:0 0;">Все / Косметика</div>
<div class="t" style="right:200px;top:661.51px;font-size:14.4px;line-height:14.4px;color:#000;">20</div>
<div class="t" style="left:744px;top:687.51px;font-size:14.4px;line-height:14.4px;color:#000;">0281845</div>
<div class="t" style="left:843px;top:687.51px;font-size:14.4px;line-height:14.4px;color:#000;">4607003241810</div>
<div class="t" style="left:987px;top:687.51px;font-size:14.4px;line-height:14.4px;color:#000;">АСЕПТА гель д/десен с Прополисо…</div>
<div class="t" style="left:1248px;top:687.51px;font-size:14.4px;line-height:14.4px;color:#000;transform:scaleX(1.0140);transform-origin:0 0;">Все / Косметика</div>
<div class="t" style="right:200px;top:687.51px;font-size:14.4px;line-height:14.4px;color:#000;">20</div>
<div class="t" style="left:744px;top:713.51px;font-size:14.4px;line-height:14.4px;color:#000;">0301977</div>
<div class="t" style="left:843px;top:713.51px;font-size:14.4px;line-height:14.4px;color:#000;">3401321207487</div>
<div class="t" style="left:987px;top:713.51px;font-size:14.4px;line-height:14.4px;color:#000;transform:scaleX(0.9838);transform-origin:0 0;">NOREVA АКВАРЕВА крем Увлаж.Лё…</div>
<div class="t" style="left:1248px;top:713.51px;font-size:14.4px;line-height:14.4px;color:#000;transform:scaleX(1.0140);transform-origin:0 0;">Все / Косметика</div>
<div class="t" style="right:200px;top:713.51px;font-size:14.4px;line-height:14.4px;color:#000;">20</div>
<div class="t" style="left:744px;top:739.51px;font-size:14.4px;line-height:14.4px;color:#000;">0301979</div>
<div class="t" style="left:843px;top:739.51px;font-size:14.4px;line-height:14.4px;color:#000;">3401321207319</div>
<div class="t" style="left:987px;top:739.51px;font-size:14.4px;line-height:14.4px;color:#000;transform:scaleX(0.9801);transform-origin:0 0;">NOREVA АКВАРЕВА крем Увлаж.На…</div>
<div class="t" style="left:1248px;top:739.51px;font-size:14.4px;line-height:14.4px;color:#000;transform:scaleX(1.0140);transform-origin:0 0;">Все / Косметика</div>
<div class="t" style="right:200px;top:739.51px;font-size:14.4px;line-height:14.4px;color:#000;">20</div>
<div class="t" style="left:744px;top:765.51px;font-size:14.4px;line-height:14.4px;color:#000;">0301983</div>
<div class="t" style="left:843px;top:765.51px;font-size:14.4px;line-height:14.4px;color:#000;">3401321229601</div>
<div class="t" style="left:987px;top:765.51px;font-size:14.4px;line-height:14.4px;color:#000;transform:scaleX(0.9859);transform-origin:0 0;">NOREVA АКВАРЕВА крем д/рук Вос…</div>
<div class="t" style="left:1248px;top:765.51px;font-size:14.4px;line-height:14.4px;color:#000;transform:scaleX(1.0140);transform-origin:0 0;">Все / Косметика</div>
<div class="t" style="right:200px;top:765.51px;font-size:14.4px;line-height:14.4px;color:#000;">20</div>
<div class="t" style="left:744px;top:791.51px;font-size:14.4px;line-height:14.4px;color:#000;">0302060</div>
<div class="t" style="left:843px;top:791.51px;font-size:14.4px;line-height:14.4px;color:#000;">3401342897186</div>
<div class="t" style="left:987px;top:791.51px;font-size:14.4px;line-height:14.4px;color:#000;">NOREVA ЭКСФОЛИАК Акномега-2…</div>
<div class="t" style="left:1248px;top:791.51px;font-size:14.4px;line-height:14.4px;color:#000;transform:scaleX(1.0140);transform-origin:0 0;">Все / Косметика</div>
<div class="t" style="right:200px;top:791.51px;font-size:14.4px;line-height:14.4px;color:#000;">20</div>
<div class="t" style="left:744px;top:817.51px;font-size:14.4px;line-height:14.4px;color:#000;">0573947</div>
<div class="t" style="left:843px;top:817.51px;font-size:14.4px;line-height:14.4px;color:#000;">4607003246570</div>
<div class="t" style="left:987px;top:817.51px;font-size:14.4px;line-height:14.4px;color:#000;">АЛЕРАНА шампунь д/мужчин &quot;Еж…</div>
<div class="t" style="left:1248px;top:817.51px;font-size:14.4px;line-height:14.4px;color:#000;transform:scaleX(1.0140);transform-origin:0 0;">Все / Косметика</div>
<div class="t" style="right:200px;top:817.51px;font-size:14.4px;line-height:14.4px;color:#000;">20</div>
<div class="t" style="left:744px;top:843.51px;font-size:14.4px;line-height:14.4px;color:#000;">0573984</div>
<div class="t" style="left:843px;top:843.51px;font-size:14.4px;line-height:14.4px;color:#000;">4607003248055</div>
<div class="t" style="left:987px;top:843.51px;font-size:14.4px;line-height:14.4px;color:#000;">АЛЕРАНА шампунь д/окраш.в.250мл</div>
<div class="t" style="left:1248px;top:843.51px;font-size:14.4px;line-height:14.4px;color:#000;transform:scaleX(1.0140);transform-origin:0 0;">Все / Косметика</div>
<div class="t" style="right:200px;top:843.51px;font-size:14.4px;line-height:14.4px;color:#000;">20</div>
<div class="b" style="left:1892px;top:190px;width:13px;height:120px;background:#dadada"></div>
<svg class="b" style="left:1891px;top:176px" width="16" height="10" viewBox="0 0 16 10" fill="none" stroke-linecap="round" stroke-linejoin="round"><path d="M3 8 L8 3 L13 8 Z" fill="#d8d8d8"/></svg>
<svg class="b" style="left:1891px;top:855px" width="16" height="10" viewBox="0 0 16 10" fill="none" stroke-linecap="round" stroke-linejoin="round"><path d="M3 2 L8 7 L13 2 Z" fill="#d8d8d8"/></svg>
<div class="b" style="left:1722px;top:166px;width:198px;height:361px;border:3px solid #f43f45"></div>
<div class="b" style="left:739px;top:879px;width:35px;height:28px;background:#d4e4e9;border-radius:5px"></div>
<svg class="b" style="left:0;top:860px" width="1920" height="93" viewBox="0 860 1920 93" stroke-linejoin="round"><rect x="747.6" y="884.6" width="3.8" height="3.8" rx="1" stroke="#4cc3ef" stroke-width="1.8" fill="none" stroke-width="1.3"/><path d="M755.3 886.5 H766.8" stroke="#3c3c3c" stroke-width="1.8" fill="none" stroke-linecap="butt"/><rect x="747.6" y="890.9" width="3.8" height="3.8" rx="1" stroke="#4cc3ef" stroke-width="1.8" fill="none" stroke-width="1.3"/><path d="M755.3 892.8 H766.8" stroke="#3c3c3c" stroke-width="1.8" fill="none" stroke-linecap="butt"/><rect x="747.6" y="897.3000000000001" width="3.8" height="3.8" rx="1" stroke="#4cc3ef" stroke-width="1.8" fill="none" stroke-width="1.3"/><path d="M755.3 899.2 H766.8" stroke="#3c3c3c" stroke-width="1.8" fill="none" stroke-linecap="butt"/><path d="M788.8 884 V902 M795.1 884 V902 M783 889.9 H801 M783 895.9 H801" stroke="#4cc3ef" stroke-width="1.8" fill="none" stroke-width="1.6" stroke-linecap="butt"/><rect x="782.3" y="883.3" width="19.4" height="19.1" stroke="#3c3c3c" stroke-width="1.8" fill="none"/><path d="M822.3 885.8 H841.6 M828.5 896.3 H835.5" stroke="#3c3c3c" stroke-width="1.8" fill="none" stroke-linecap="butt"/><path d="M825.8 891.1 H838.2 M830.5 901 H833.5" stroke="#4cc3ef" stroke-width="1.8" fill="none" stroke-linecap="butt"/><path d="M878.70 892.80 L878.58 894.07 L880.80 895.49 L879.31 898.42 L876.86 897.45 L875.30 898.69 L875.30 898.69 L874.14 899.22 L874.02 901.85 L870.73 902.03 L870.35 899.42 L868.50 898.69 L868.50 898.69 L867.46 897.95 L865.12 899.17 L863.33 896.40 L865.39 894.77 L865.10 892.80 L865.10 892.80 L865.22 891.53 L863.00 890.11 L864.49 887.18 L866.94 888.15 L868.50 886.91 L868.50 886.91 L869.66 886.38 L869.78 883.75 L873.07 883.57 L873.45 886.18 L875.30 886.91 L875.30 886.91 L876.34 887.65 L878.68 886.43 L880.47 889.20 L878.41 890.83 L878.70 892.80Z" stroke="#3c3c3c" stroke-width="1.9" fill="none" stroke-linejoin="round"/><circle cx="871.9" cy="892.8" r="3.3" stroke="#4cc3ef" stroke-width="1.8" fill="none" stroke-width="1.9"/><path d="M910.7 885.8 H921.6 M910.7 893.1 H921.6 M910.7 900.8 H921.6" stroke="#3c3c3c" stroke-width="1.8" fill="none" stroke-linecap="butt"/><path d="M904.2 883.3 L905.2 882.6 V888.5 M903.5 891 Q904.2 890 905 890 Q906.3 890 906.3 891.3 Q906.3 892.3 903.5 895.2 H906.5 M903.6 898.3 H906.2 L904.8 900 Q906.4 900 906.4 901.5 Q906.4 903 904.8 903 Q904 903 903.5 902.4" stroke="#4cc3ef" stroke-width="1.1" fill="none"/><path d="M937.5 885.1 H956.7 M937.5 889.9 H956.7 M937.5 894.7 H947 M937.5 899.6 H944.5" stroke="#3c3c3c" stroke-width="1.8" fill="none" stroke-linecap="butt"/><path d="M953 893 V901.5 M948.8 897.2 H957.2" stroke="#4cc3ef" stroke-width="1.8" fill="none" stroke-linecap="butt"/><path d="M986 887 H980.5 Q977.5 887 977.5 890 V899.2 Q977.5 902.2 980.5 902.2 H989.3 Q992.3 902.2 992.3 899.2 V894.4" stroke="#555" stroke-width="2" fill="none" stroke-linecap="butt"/><path d="M986.5 893.2 L995.5 884.2" stroke="#4cc3ef" stroke-width="1.8" fill="none" stroke-linecap="butt"/><path d="M990 883.2 H996.5 V889.7 Z" fill="#4cc3ef"/><path d="M1020 898.7 H1017.3 V887.3 H1030.5 M1027.5 884.3 L1030.6 887.3 L1027.5 890.3" stroke="#2e2e2e" stroke-width="1.7" fill="none"/><path d="M1032.5 887.3 H1036.5 V898.7 H1023.6 M1026.7 895.7 L1023.6 898.7 L1026.7 901.7" stroke="#4cc3ef" stroke-width="1.8" fill="none" stroke-width="1.7"/></svg>
<svg class="b" style="left:1350px;top:884px" width="15" height="15" viewBox="0 0 15 15" fill="none" stroke-linecap="round" stroke-linejoin="round"><rect x="0.5" y="0.5" width="14" height="14" rx="2.5" fill="#0b6cf2"/><path d="M3.3 7.8 L6.2 10.8 L11.8 4" stroke="#fff" stroke-width="2"/></svg>
<div class="t" style="left:1368px;top:888.30px;font-size:15px;line-height:15px;color:#000;transform:scaleX(0.9630);transform-origin:0 0;">Активные (F10)</div>
<div class="b" style="left:1480px;top:879px;width:144px;height:29px;background:#fff;border:1px solid #cfcfcf;border-radius:4px"></div>
<div class="t" style="left:1489.6px;top:887.30px;font-size:15px;line-height:15px;color:#000;transform:scaleX(0.9650);transform-origin:0 0;">С группами (F9)</div>
<svg class="b" style="left:1604px;top:887px" width="16" height="12" viewBox="0 0 16 12" fill="none" stroke-linecap="round" stroke-linejoin="round"><path d="M3 3.5 L8 8.5 L13 3.5" stroke="#000" stroke-width="1.8"/></svg>
<svg class="b" style="left:1637px;top:884px" width="15" height="15" viewBox="0 0 15 15" fill="none" stroke-linecap="round" stroke-linejoin="round"><rect x="0.75" y="0.75" width="13.5" height="13.5" rx="2.5" stroke="#6d6d6d" stroke-width="1.3" fill="#fff"/></svg>
<div class="t" style="left:1655.7px;top:887.30px;font-size:15px;line-height:15px;color:#000;transform:scaleX(0.9921);transform-origin:0 0;">Товары с планируемой ставкой НДС</div>
<div class="b" style="left:1382px;top:921px;width:51px;height:27px;background:#fff;border:1px solid #d2d2d2;border-radius:4px"></div>
<div class="b" style="left:1439px;top:921px;width:131px;height:27px;background:#fff;border:1px solid #d2d2d2;border-radius:4px"></div>
<div class="b" style="left:1577px;top:921px;width:125px;height:27px;background:#fff;border:1px solid #d2d2d2;border-radius:4px"></div>
<div class="b" style="left:1708px;top:921px;width:78px;height:27px;background:#fff;border:1px solid #d2d2d2;border-radius:4px"></div>
<div class="b" style="left:1792px;top:921px;width:116px;height:27px;background:#fff;border:1px solid #d2d2d2;border-radius:4px"></div>
<div class="t" style="left:1480.8px;top:928.00px;font-size:15px;line-height:15px;color:#000;transform:scaleX(0.9593);transform-origin:0 0;">Сохранить</div>
<div class="t" style="left:1617.8px;top:928.00px;font-size:15px;line-height:15px;color:#000;transform:scaleX(0.9643);transform-origin:0 0;">Отменить</div>
<div class="t" style="left:1749.2px;top:928.00px;font-size:15px;line-height:15px;color:#000;transform:scaleX(0.8813);transform-origin:0 0;">OK</div>
<div class="t" style="left:1833.4px;top:928.00px;font-size:15px;line-height:15px;color:#000;transform:scaleX(0.9622);transform-origin:0 0;">Закрыть</div>
<svg class="b" style="left:0;top:860px" width="1920" height="93" viewBox="0 860 1920 93" stroke-linecap="round" stroke-linejoin="round"><path d="M1403 931.5 Q1405 928.3 1408.5 928.3 Q1412.5 928.3 1414.5 931" stroke="#3c3c3c" stroke-width="1.8" fill="none"/><path d="M1415.6 927.8 L1415.2 932.5 L1410.8 931.6" stroke="#3c3c3c" stroke-width="1.8" fill="none" fill="#3c3c3c"/><path d="M1414 937.5 Q1412 940.7 1408.5 940.7 Q1404.5 940.7 1402.5 938" stroke="#4cc3ef" stroke-width="1.8" fill="none"/><path d="M1401.4 941.2 L1401.8 936.5 L1406.2 937.4" stroke="#4cc3ef" stroke-width="1.8" fill="none" fill="#4cc3ef"/><path d="M1460.5 928.3 H1468.5 L1472 931.8 V939 Q1472 940.8 1470.2 940.8 H1460.5 Q1458.7 940.8 1458.7 939 V930.1 Q1458.7 928.3 1460.5 928.3 Z" stroke="#3c3c3c" stroke-width="1.8" fill="none"/><path d="M1459.8 935.4 H1470.9" stroke="#4cc3ef" stroke-width="2.2"/><path d="M1596 929.3 H1609 M1599.8 929.3 V927.6 H1605.2 V929.3" stroke="#4cc3ef" stroke-width="1.8" fill="none" stroke-width="1.6"/><path d="M1598 931.8 V940.7 H1607 V931.8" stroke="#3c3c3c" stroke-width="1.8" fill="none"/><path d="M1726.3 935.3 L1730.5 939.8 L1740 929.5" stroke="#3c3c3c" stroke-width="1.9" fill="none"/><path d="M1812.5 930.5 L1824 940 M1824 930.5 L1812.5 940" stroke="#3c3c3c" stroke-width="1.9" fill="none"/></svg>
<div class="b" style="left:1435px;top:916px;width:138px;height:36px;border:3px solid #f43f45"></div>
<div class="b" style="left:1692px;top:145.8px;width:40px;height:40px;border-radius:50%;background:#f43f45;"></div>
<svg class="b" style="left:0px;top:0px" width="1920" height="953" viewBox="0 0 1920 953" fill="none" stroke-linecap="round" stroke-linejoin="round"><path d="M1706.8 160.8 L1713.8 156.6 V176.8" stroke="#fff" stroke-width="3" stroke-linecap="butt" stroke-linejoin="miter"/></svg>
<div class="b" style="left:1415px;top:896px;width:40px;height:40px;border-radius:50%;background:#f43f45;"></div>
<svg class="b" style="left:0px;top:0px" width="1920" height="953" viewBox="0 0 1920 953" fill="none" stroke-linecap="round" stroke-linejoin="round"><path d="M1428.6 911.8 C1429.6 909.4 1431.9 908.5 1434.6 908.5 C1438.5 908.5 1440.4 910.7 1440.4 913.8 C1440.4 916.6 1438.7 918.6 1435.6 921.3 L1429 926 H1441.9" stroke="#fff" stroke-width="3" stroke-linecap="butt" stroke-linejoin="miter"/></svg>
</body></html>
